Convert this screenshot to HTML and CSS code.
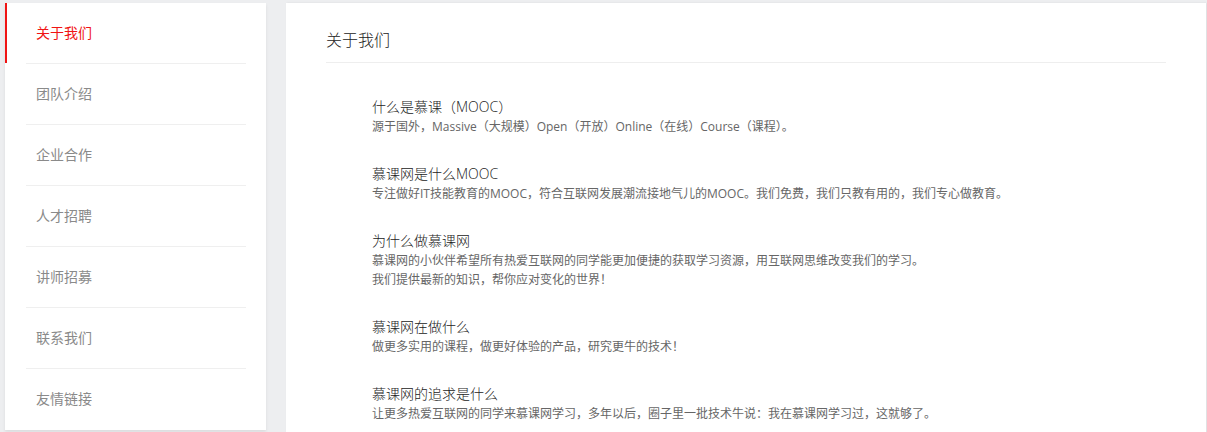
FILE: index.html
```html
<!DOCTYPE html>
<html lang="zh-CN">
<head>
<meta charset="utf-8">
<title>关于我们</title>
<link rel="stylesheet" href="styles.css">
</head>
<body>
<div class="page">
  <aside class="sidebar">
    <ul class="nav">
      <li class="nav-item active"><a>关于我们</a></li>
      <li class="nav-item"><a>团队介绍</a></li>
      <li class="nav-item"><a>企业合作</a></li>
      <li class="nav-item"><a>人才招聘</a></li>
      <li class="nav-item"><a>讲师招募</a></li>
      <li class="nav-item"><a>联系我们</a></li>
      <li class="nav-item last"><a>友情链接</a></li>
    </ul>
  </aside>
  <main class="main">
    <h2 class="main-title">关于我们</h2>
    <div class="content">
      <div class="item">
        <h3 class="item-title">什么是慕课（MOOC）</h3>
        <p class="item-desc">源于国外，Massive（大规模）Open（开放）Online（在线）Course（课程）。</p>
      </div>
      <div class="item">
        <h3 class="item-title">慕课网是什么MOOC</h3>
        <p class="item-desc">专注做好IT技能教育的MOOC，符合互联网发展潮流接地气儿的MOOC。我们免费，我们只教有用的，我们专心做教育。</p>
      </div>
      <div class="item">
        <h3 class="item-title">为什么做慕课网</h3>
        <p class="item-desc">慕课网的小伙伴希望所有热爱互联网的同学能更加便捷的获取学习资源，用互联网思维改变我们的学习。<br>我们提供最新的知识，帮你应对变化的世界！</p>
      </div>
      <div class="item">
        <h3 class="item-title">慕课网在做什么</h3>
        <p class="item-desc">做更多实用的课程，做更好体验的产品，研究更牛的技术！</p>
      </div>
      <div class="item">
        <h3 class="item-title">慕课网的追求是什么</h3>
        <p class="item-desc">让更多热爱互联网的同学来慕课网学习，多年以后，圈子里一批技术牛说：我在慕课网学习过，这就够了。</p>
      </div>
    </div>
  </main>
</div>
</body>
</html>
```

FILE: styles.css
```css
* { box-sizing: border-box; }
html, body {
  margin: 0;
  padding: 0;
  background: #edeef0;
  font-family: "Open Sans", "Noto Sans CJK SC", sans-serif;
}
.page {
  display: flex;
  align-items: flex-start;
  gap: 20px;
  padding: 3px 0 0 5px;
}
.sidebar {
  width: 261px;
  flex: none;
  background: #fff;
  box-shadow: 0 2px 3px rgba(0,0,0,0.08);
}
.nav {
  list-style: none;
  margin: 0;
  padding: 0;
}
.nav-item {
  position: relative;
  height: 61px;
  margin: 0 20px 0 21px;
  border-bottom: 1px solid #efefef;
}
.nav-item.last { border-bottom: none; }
.nav-item a {
  display: block;
  padding-left: 10px;
  line-height: 60px;
  font-size: 14px;
  color: #8a8a8a;
}
.nav-item.active a { color: #f01414; }
.nav-item.active::before {
  content: "";
  position: absolute;
  left: -21px;
  top: 0;
  width: 2px;
  height: 60px;
  background: #f01414;
}
.main {
  width: 920px;
  flex: none;
  background: #fff;
  min-height: 440px;
  box-shadow: 1px 0 2px rgba(0,0,0,0.08);
  padding: 0 40px;
}
.main-title {
  margin: 0;
  padding: 22px 0 7px;
  line-height: 30px;
  font-size: 16px;
  font-weight: 300;
  color: #222;
  border-bottom: 1px solid #eee;
}
.content {
  padding: 33px 0 0 46px;
  display: flex;
  flex-direction: column;
  gap: 27px;
}
.item-title {
  margin: 0;
  font-size: 14px;
  line-height: 21px;
  font-weight: 300;
  color: #222;
}
.item-desc {
  margin: 0;
  font-size: 12px;
  line-height: 19px;
  color: #666;
}
```
